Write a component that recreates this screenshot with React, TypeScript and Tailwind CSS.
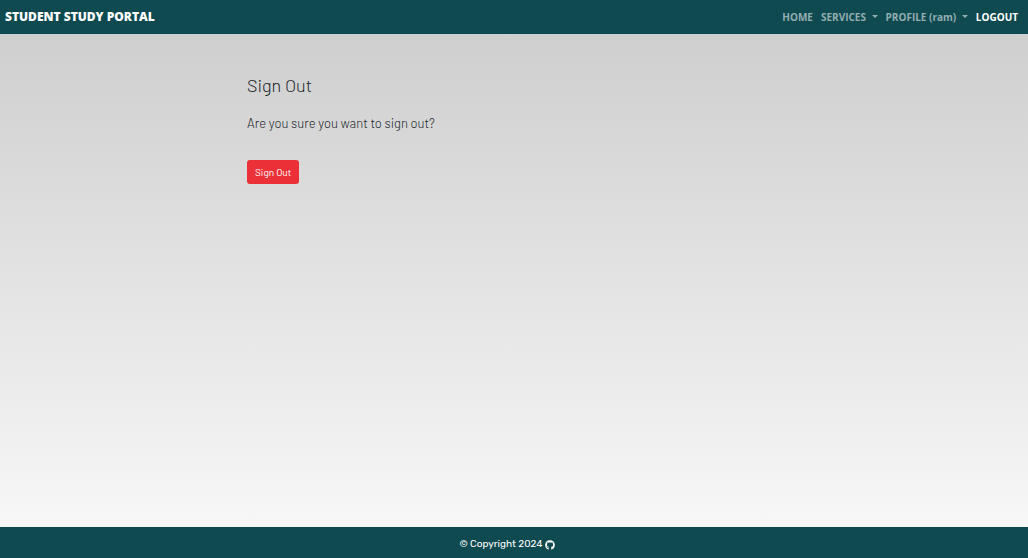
import { FaGithub } from "react-icons/fa";

function Caret() {
  return <span className="ml-[3px] inline-block border-x-[3px] border-t-[3px] border-x-transparent border-t-current align-[3px]" />;
}

export default function App() {
  return (
    <div className="flex min-h-screen flex-col bg-linear-to-b from-[#cccccc] to-[#fafafa] font-['Barlow','Roboto',sans-serif] text-[#212529]">
      <nav className="flex h-[34px] items-center justify-between bg-[#0f4a50] pr-[10px] pl-[5px] font-['Open_Sans','Noto_Sans',sans-serif]">
        <a href="#" className="text-[12px] font-extrabold text-white">STUDENT STUDY PORTAL</a>
        <div className="flex items-center gap-2 text-[10px] font-bold text-[#93aeb0]">
          <a href="#">HOME</a>
          <button type="button">SERVICES <Caret /></button>
          <button type="button">PROFILE (ram) <Caret /></button>
          <a href="#" className="text-white">LOGOUT</a>
        </div>
      </nav>
      <main className="mx-auto w-full max-w-[534px] flex-1 pt-10">
        <h1 className="text-[18px] leading-[22px] font-light">Sign Out</h1>
        <p className="mt-4 text-[13px] leading-[22px] font-light">Are you sure you want to sign out?</p>
        <button type="button" className="mt-[26px] h-6 rounded-[3px] bg-[#eb3038] px-2 text-[10px] text-white">Sign Out</button>
      </main>
      <footer className="flex h-[31px] items-center justify-center gap-[2px] bg-[#0f4a50] pt-1 pr-[14px] font-['Rubik','Roboto',sans-serif] text-[10px] text-white">
        <span>© Copyright 2024</span>
        <FaGithub aria-label="GitHub" />
      </footer>
    </div>
  );
}
